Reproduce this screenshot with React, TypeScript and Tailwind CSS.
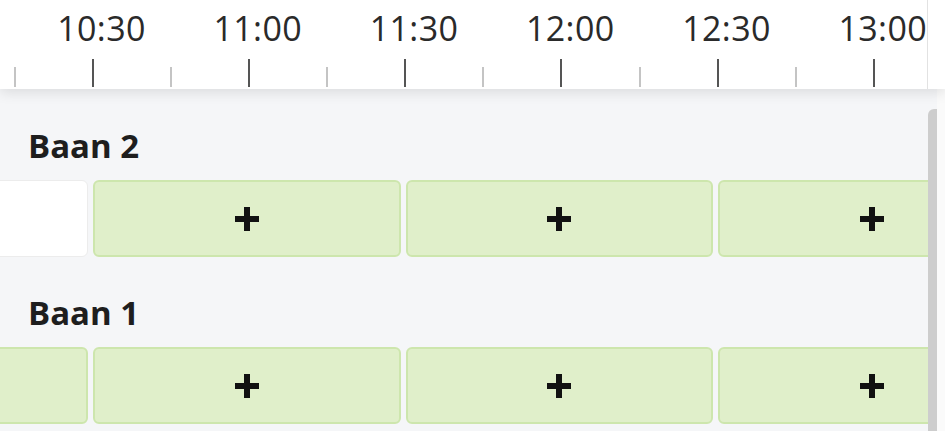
import { Fragment } from "react";

const halfHours = ["10:30", "11:00", "11:30", "12:00", "12:30", "13:00"];

type Slot = { kind: "free" | "blocked" };

const lanes: { name: string; slots: Slot[] }[] = [
  { name: "Baan 2", slots: [{ kind: "blocked" }, { kind: "free" }, { kind: "free" }, { kind: "free" }] },
  { name: "Baan 1", slots: [{ kind: "free" }, { kind: "free" }, { kind: "free" }, { kind: "free" }] },
];

function Plus() {
  return (
    <svg width="30" height="30" viewBox="0 0 30 30" className="shrink-0">
      <path d="M15 3v24M3 15h24" stroke="#111" strokeWidth="6" />
    </svg>
  );
}

function SlotCell({ slot, showPlus }: { slot: Slot; showPlus: boolean }) {
  if (slot.kind === "blocked") {
    return <div className="w-[307.5px] h-[77px] shrink-0 rounded-md bg-white border border-[#ececec]" />;
  }
  return (
    <div className="w-[307.5px] h-[77px] shrink-0 rounded-md bg-[#e0efca] border-2 border-[#cde6ad] flex items-center justify-center">
      {showPlus && <Plus />}
    </div>
  );
}

export default function App() {
  return (
    <div
      className="w-[945px] h-[431px] overflow-hidden bg-[#f5f6f8] flex flex-col text-[#222]"
      style={{ fontFamily: '"Open Sans", "Noto Sans", sans-serif' }}
    >
      {/* timeline ruler */}
      <div className="relative z-10 h-[89px] shrink-0 bg-white shadow-[0_4px_12px_rgba(0,0,0,0.10)] flex">
        <div className="w-[927px] shrink-0 overflow-hidden flex flex-col">
          <div className="flex h-[59px] pt-[8px] ml-[23.4px]">
            {halfHours.map((t) => (
              <div
                key={t}
                className="w-[156.25px] shrink-0 text-center text-[34px] leading-[40px] tracking-[0.4px] text-[#2a2a2a]"
              >
                {t}
              </div>
            ))}
          </div>
          <div className="flex items-end h-[28px] ml-[13.5px]">
            {halfHours.map((t) => (
              <Fragment key={t}>
                <div className="w-[78.125px] shrink-0 h-[20px] flex">
                  <div className="w-[2px] h-full bg-[#c4c4c4]" />
                </div>
                <div className="w-[78.125px] shrink-0 h-[28px] flex">
                  <div className="w-[2px] h-full bg-[#555]" />
                </div>
              </Fragment>
            ))}
          </div>
        </div>
        <div className="w-px bg-[#e2e2e2]" />
        <div className="flex-1 bg-white" />
      </div>

      {/* lanes */}
      <div className="flex flex-1 min-h-0">
        <div className="w-[928px] shrink-0 overflow-hidden pt-[37px] flex flex-col gap-[36px]">
          {lanes.map((lane) => (
            <div key={lane.name} className="flex flex-col">
              <div className="pl-[28px] text-[33px] leading-[40px] font-bold text-[#1e1e1e]">{lane.name}</div>
              <div className="mt-[14px] flex gap-[5px] ml-[-219.5px]">
                {lane.slots.map((s, i) => (
                  <SlotCell key={i} slot={s} showPlus={i > 0} />
                ))}
              </div>
            </div>
          ))}
        </div>
        <div className="w-[9px] shrink-0 mt-[20px] bg-[#cdcdcd] rounded-tl-[6px]" />
        <div className="flex-1 bg-[#fafafa]" />
      </div>
    </div>
  );
}
